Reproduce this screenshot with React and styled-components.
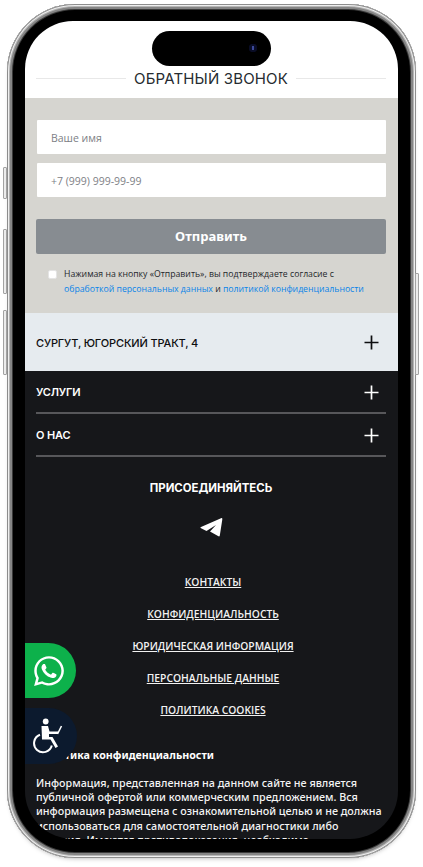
import React from 'react';
import styled, { createGlobalStyle } from 'styled-components';
import { FaWhatsapp } from 'react-icons/fa';

const Global = createGlobalStyle`
  html, body { margin: 0; padding: 0; background: #fff; }
  body { font-family: "Open Sans", "Noto Sans", sans-serif; overflow: hidden; height: 867px; }
  * { box-sizing: border-box; }
`;
const Stage = styled.div`
  width: 423px; height: 867px; padding: 4px 7px 9px 7px; overflow: hidden;
`;
const Phone = styled.div`
  position: relative; width: 409px; height: 854px; padding: 17px 18px 19px 18px;
  border-radius: 68px; background: #000;
  box-shadow: inset 0 0 0 1px #8d8d8d, inset 0 0 0 2px #efefef, inset 0 0 0 3px #b5b5b5, inset 0 0 0 5px #858585, inset 0 0 0 6px #3a3a3a, 0 3px 5px -3px rgba(0,0,0,.35);
`;
const SideKey = styled.span`
  position: absolute; width: 4px; top: ${p => p.$top}px; height: ${p => p.$h}px;
  ${p => p.$right ? 'right: -3px;' : 'left: -4px;'}
  background: #ececec; border: 1px solid #a2a2a2; border-radius: 1px;
`;
const Screen = styled.div`
  position: relative; width: 373px; height: 818px; overflow: hidden; border-radius: 48px; background: #16171a;
`;
const Island = styled.div`
  position: absolute; z-index: 3; top: 10px; left: 127px; width: 119px; height: 35px; border-radius: 18px; background: #000;
`;
const Lens = styled.span`
  position: absolute; right: 14px; top: 13px; width: 8px; height: 8px; border-radius: 50%; background: #0b1030;
  box-shadow: inset 0 0 0 2px #0a0d26;
  &::after { content: ''; position: absolute; left: 3px; top: 2px; width: 2px; height: 4px; background: #3d4a9a; }
`;
const Header = styled.header`
  background: #fff; height: 77px; padding: 0 12px 10px 11px; display: flex; align-items: flex-end; gap: 8px;
`;
const Rule = styled.span`flex: 1; height: 1px; background: #e8e8e8; margin-bottom: 9px;`;
const Title = styled.h2`
  margin: 0; font: 400 15px/18px Inter, sans-serif; letter-spacing: .15px; color: #262b30; white-space: nowrap;
`;
const Form = styled.form`
  background: #d6d5d0; height: 215px; padding: 22px 12px 0 11px; display: flex; flex-direction: column;
`;
const Field = styled.div`
  height: 34px; margin: 0 0 9px 1px; padding-left: 14px; background: #fff; border-radius: 1px;
  font-size: 10.5px; color: #7d8085; line-height: 37px;
`;
const Submit = styled.div`
  height: 35px; margin-top: 13px; background: #878c91; border-radius: 2px; text-align: center;
  color: #fff; font: 700 13px/35px "Noto Sans", sans-serif;
`;
const Consent = styled.div`
  display: flex; gap: 7px; margin: 13px 0 0 12px; font-size: 8.7px; font-weight: 500; line-height: 15px; color: #24272b;
`;
const Check = styled.span`
  flex: none; width: 9px; height: 9px; margin-top: 3px; background: #fff; border-radius: 2px; border: 1px solid #e4e4e4;
`;
const Blue = styled.span`color: #0a84e8;`;
const Address = styled.div`
  height: 58px; padding: 1px 19px 0 11px; background: #e6ebef; color: #0d0e10; display: flex; align-items: center; justify-content: space-between;
`;
const AccLabel = styled.span`font: ${p => (p.$bold ? 600 : 500)} 11px/14px Inter, sans-serif; letter-spacing: -.15px; color: inherit;`;
const PlusIcon = styled.svg`width: 15px; height: 15px; flex: none; display: block;`;
const Plus = () => (
  <PlusIcon viewBox="0 0 15 15" fill="none" stroke="currentColor" strokeWidth="1.7"><path d="M7.5 0.5v14M0.5 7.5h14" /></PlusIcon>
);
const Dark = styled.div`color: #fff; padding: 0 12px 0 11px;`;
const AccRow = styled.div`
  height: 43px; padding: 1px 7px 0 0; display: flex; align-items: center; justify-content: space-between; border-bottom: 2px solid #57575a; color: #fff;
`;
const Join = styled.h3`
  margin: 23px 0 0; text-align: center; font: 700 11.4px/16px Inter, sans-serif; color: #fff;
`;
const Social = styled.div`display: flex; justify-content: center; margin-top: 21px; line-height: 0; color: #fff;`;
const Links = styled.nav`display: flex; flex-direction: column; align-items: center; gap: 14.1px; margin-top: 36px; padding-left: 4px;`;
const FootLink = styled.a`
  font-size: 10.3px; font-weight: 600; line-height: 18px; color: #f2f2f2; text-decoration: underline; text-transform: uppercase;
`;
const PolicyHead = styled.h4`margin: 27.5px 0 0; font: 700 10.7px/16px "Noto Sans", sans-serif; color: #fff;`;
const Para = styled.p`margin: 13px 2px 0 0; font: 500 10.75px/14.25px "Noto Sans", sans-serif; color: #f4f4f4;`;
const Float = styled.div`
  position: absolute; left: 0; top: ${p => p.$top}px; width: ${p => p.$w}px; height: ${p => p.$h}px;
  background: ${p => p.$bg}; border-radius: 0 28px 28px 0; display: flex; align-items: center; color: #fff;
  padding-left: 7px;
`;

const links = ['Контакты', 'Конфиденциальность', 'Юридическая информация', 'Персональные данные', 'Политика cookies'];

export default function App() {
  return (
    <Stage>
      <Global />
      <Phone>
        <SideKey $top={163} $h={32} />
        <SideKey $top={225} $h={65} />
        <SideKey $top={306} $h={65} />
        <SideKey $right $top={269} $h={102} />
        <Screen>
          <Island><Lens /></Island>
          <Header>
            <Rule /><Title>ОБРАТНЫЙ ЗВОНОК</Title><Rule />
          </Header>
          <Form>
            <Field>Ваше имя</Field>
            <Field>+7 (999) 999-99-99</Field>
            <Submit>Отправить</Submit>
            <Consent>
              <Check />
              <div>
                Нажимая на кнопку «Отправить», вы подтверждаете согласие с<br />
                <Blue>обработкой персональных данных</Blue> и <Blue>политикой конфиденциальности</Blue>
              </div>
            </Consent>
          </Form>
          <Address><AccLabel>СУРГУТ, ЮГОРСКИЙ ТРАКТ, 4</AccLabel><Plus /></Address>
          <Dark>
            <AccRow><AccLabel $bold>УСЛУГИ</AccLabel><Plus /></AccRow>
            <AccRow><AccLabel $bold>О НАС</AccLabel><Plus /></AccRow>
            <Join>ПРИСОЕДИНЯЙТЕСЬ</Join>
            <Social>
              <svg width="23" height="20" viewBox="0 0 23 20" fill="#fff">
                <path d="M0.6 11 Q0 10.5 1 10 L21 1.2 Q22.6 0.8 22.3 2.5 L19.8 18.5 Q19.5 20 18 19 L10 14.5 L16 8 L6.5 14 Z" />
              </svg>
            </Social>
            <Links>{links.map(l => <FootLink key={l}>{l}</FootLink>)}</Links>
            <PolicyHead>Политика конфиденциальности</PolicyHead>
            <Para>Информация, представленная на данном сайте не является публичной офертой или коммерческим предложением. Вся информация размещена с ознакомительной целью и не должна использоваться для самостоятельной диагностики либо лечения. Имеются противопоказания, необходима консультация специалиста.</Para>
          </Dark>
          <Float $top={622} $w={51} $h={55} $bg="#0db14b"><FaWhatsapp size={34} /></Float>
          <Float $top={687} $w={52} $h={56} $bg="#0c1a2e">
            <svg width="31" height="36" viewBox="0 0 31 36" fill="none">
              <circle cx="13.7" cy="3.5" r="2.9" fill="#fff" />
              <path d="M9.5 8h6.5l1.5 5.5h8.5v2.5h-9v3h3.5l5.5 9.5-2.5 1.5-5-8.5h-8.5z" fill="#fff" />
              <path d="M29.5 8L25.5 16" stroke="#fff" strokeWidth="1.6" />
              <path d="M8 16.8A9 9 0 1 0 19.8 27.5" stroke="#fff" strokeWidth="2" />
            </svg>
          </Float>
        </Screen>
      </Phone>
    </Stage>
  );
}
